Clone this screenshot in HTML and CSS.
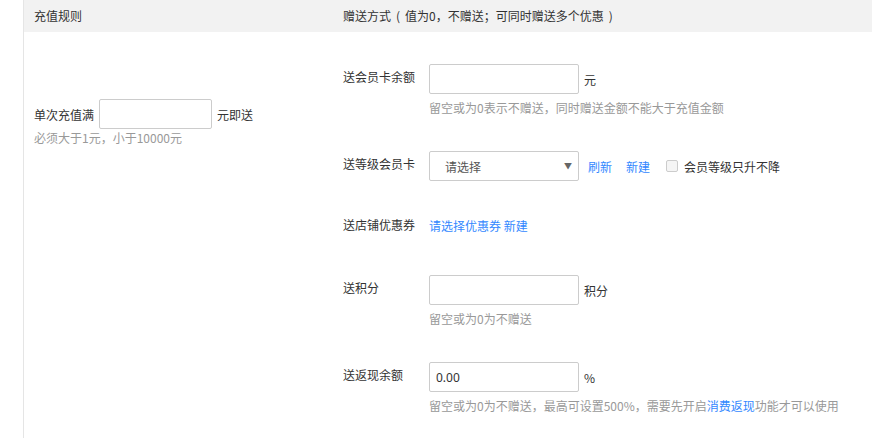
FILE: index.html
```html
<!DOCTYPE html>
<html lang="zh-CN">
<head>
<meta charset="utf-8">
<link rel="stylesheet" href="styles.css">
</head>
<body>
<div class="page">
  <div class="row head">
    <div class="cell">充值规则</div>
    <div class="cell">赠送方式<span class="paren">(</span>值为0，不赠送；可同时赠送多个优惠<span class="paren">)</span></div>
  </div>
  <div class="row body">
    <div class="cell left">
      <div class="line">
        <span>单次充值满</span>
        <input class="input input-sm" type="text">
        <span class="unit">元即送</span>
      </div>
      <div class="help help-left">必须大于1元，小于10000元</div>
    </div>
    <div class="cell right">
      <div class="group">
        <label class="label">送会员卡余额</label>
        <div class="controls">
          <div class="line">
            <input class="input" type="text">
            <span class="unit">元</span>
          </div>
          <div class="help">留空或为0表示不赠送，同时赠送金额不能大于充值金额</div>
        </div>
      </div>
      <div class="group group-select">
        <label class="label">送等级会员卡</label>
        <div class="controls">
          <div class="line">
            <div class="select">
              <span>请选择</span>
              <span class="arrow">▼</span>
            </div>
            <a class="link link-first">刷新</a>
            <a class="link link-second">新建</a>
            <span class="check"></span>
            <span class="check-text">会员等级只升不降</span>
          </div>
        </div>
      </div>
      <div class="group">
        <label class="label label-mid">送店铺优惠券</label>
        <div class="controls">
          <div class="line line-text">
            <a class="link">请选择优惠券</a>&nbsp;<a class="link">新建</a>
          </div>
        </div>
      </div>
      <div class="group">
        <label class="label">送积分</label>
        <div class="controls">
          <div class="line">
            <input class="input" type="text">
            <span class="unit">积分</span>
          </div>
          <div class="help">留空或为0为不赠送</div>
        </div>
      </div>
      <div class="group">
        <label class="label">送返现余额</label>
        <div class="controls">
          <div class="line">
            <input class="input" type="text" value="0.00">
            <span class="unit">%</span>
          </div>
          <div class="help">留空或为0为不赠送，最高可设置500%，需要先开启<a class="link">消费返现</a>功能才可以使用</div>
        </div>
      </div>
    </div>
  </div>
</div>
</body>
</html>
```

FILE: styles.css
```css
html, body {
  margin: 0;
  padding: 0;
  background: #fff;
}
body {
  font-family: "Noto Sans CJK SC", "Noto Sans", sans-serif;
  font-size: 12px;
  color: #333;
  width: 872px;
  height: 438px;
  overflow: hidden;
}
.page {
  margin-left: 23px;
  border-left: 1px solid #e5e5e5;
  height: 438px;
}
.row {
  display: grid;
  grid-template-columns: 309px 1fr;
}
.head {
  background: #f2f2f2;
  height: 32px;
  line-height: 32px;
  color: #333;
}
.head .cell {
  padding-left: 10px;
}
.paren {
  margin: 0 5px;
}
.left {
  padding: 67px 0 0 10px;
}
.right {
  padding: 32px 0 0 10px;
}
.line {
  display: flex;
  align-items: center;
  height: 30px;
}
.unit {
  margin-left: 5px;
}
.input {
  box-sizing: border-box;
  width: 150px;
  height: 30px;
  border: 1px solid #ccc;
  border-radius: 2px;
  padding: 0 6px;
  margin: 0;
  font-family: "Noto Sans", "Noto Sans CJK SC", sans-serif;
  font-size: 12px;
  color: #333;
  outline: none;
  background: #fff;
}
.input-sm {
  width: 113px;
  margin-left: 5px;
}
.help {
  color: #999;
  line-height: 16px;
  margin-top: 6px;
  white-space: nowrap;
}
.help-left {
  margin-top: 1px;
}
.group {
  display: flex;
  margin-bottom: 35px;
}
.group-select {
  margin-bottom: 29px;
}
.label {
  width: 86px;
  flex: none;
  line-height: 26px;
}
.label-mid {
  line-height: 30px;
}
.controls {
  flex: 1;
}
.line-text {
  height: 30px;
}
.link {
  color: #38f;
  text-decoration: none;
  cursor: pointer;
}
.select {
  box-sizing: border-box;
  width: 150px;
  height: 30px;
  border: 1px solid #ccc;
  border-radius: 2px;
  display: flex;
  align-items: center;
  justify-content: space-between;
  padding: 0 6px 0 15px;
  color: #555;
  background: #fff;
}
.arrow {
  font-size: 8px;
  color: #666;
  margin-top: -2px;
}
.link-first {
  margin-left: 9px;
}
.link-second {
  margin-left: 14px;
}
.check {
  box-sizing: border-box;
  width: 12px;
  height: 12px;
  border: 1px solid #ccc;
  border-radius: 2px;
  background: #f5f5f5;
  margin-left: 16px;
}
.check-text {
  margin-left: 6px;
}
```
